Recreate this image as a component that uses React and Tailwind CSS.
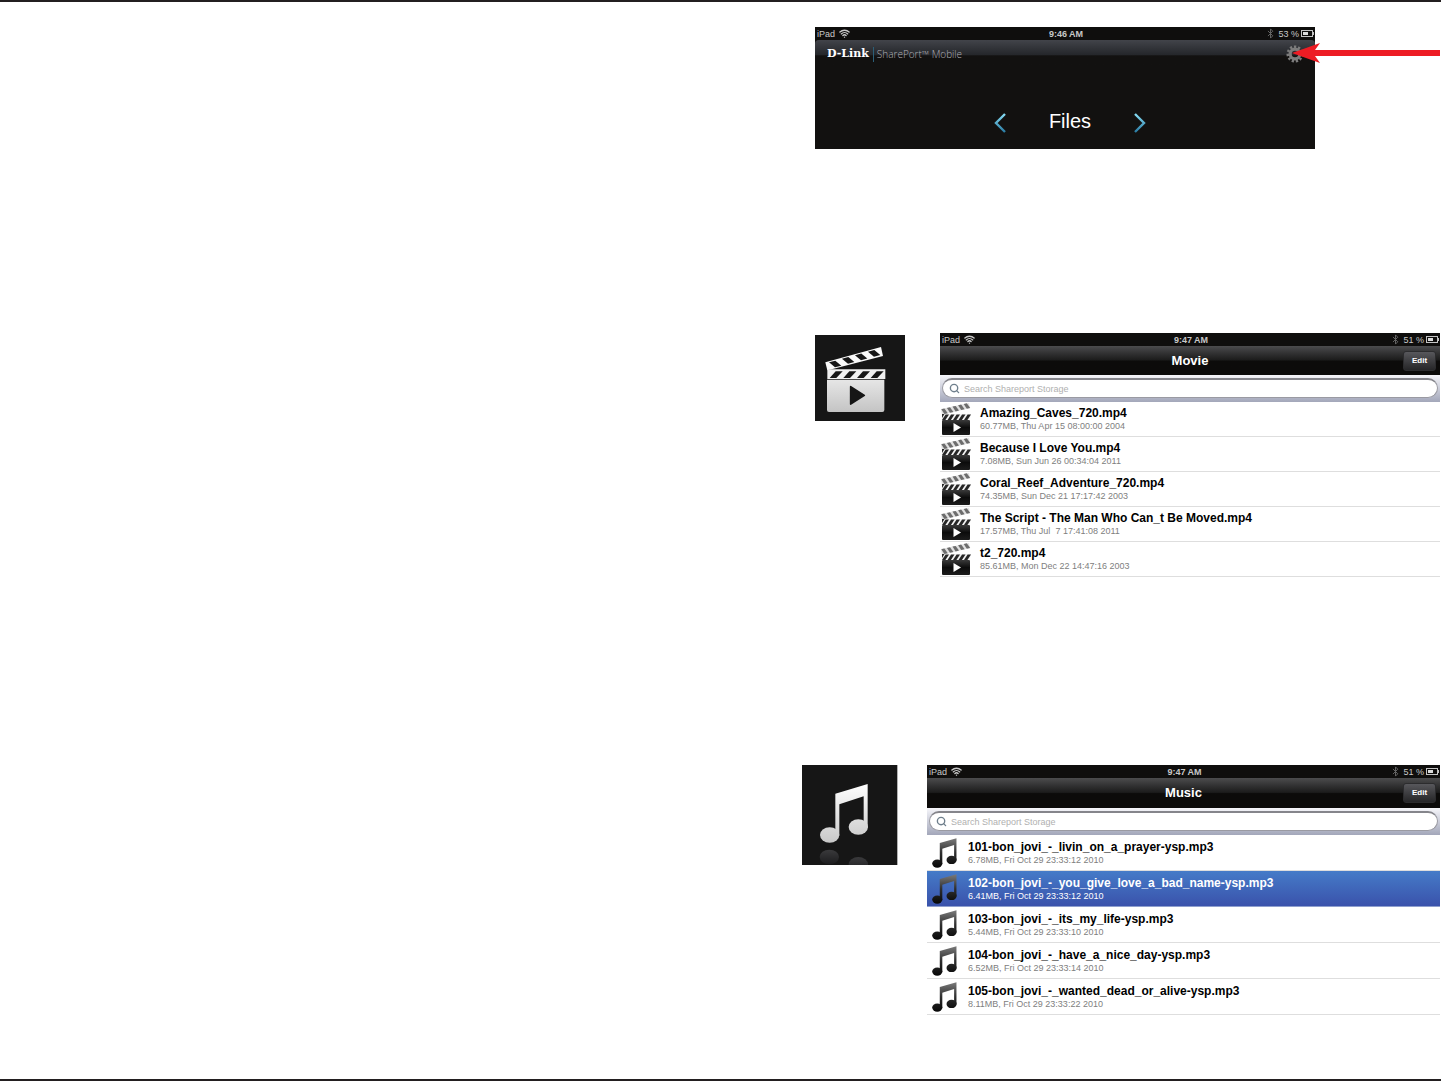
import { useState } from 'react';
import { Bluetooth, Search, Wifi } from 'lucide-react';

const movies = [
  { name: 'Amazing_Caves_720.mp4', info: '60.77MB, Thu Apr 15 08:00:00 2004' },
  { name: 'Because I Love You.mp4', info: '7.08MB, Sun Jun 26 00:34:04 2011' },
  { name: 'Coral_Reef_Adventure_720.mp4', info: '74.35MB, Sun Dec 21 17:17:42 2003' },
  { name: 'The Script - The Man Who Can_t Be Moved.mp4', info: '17.57MB, Thu Jul  7 17:41:08 2011' },
  { name: 't2_720.mp4', info: '85.61MB, Mon Dec 22 14:47:16 2003' },
];

const songs = [
  { name: '101-bon_jovi_-_livin_on_a_prayer-ysp.mp3', info: '6.78MB, Fri Oct 29 23:33:12 2010' },
  { name: '102-bon_jovi_-_you_give_love_a_bad_name-ysp.mp3', info: '6.41MB, Fri Oct 29 23:33:12 2010' },
  { name: '103-bon_jovi_-_its_my_life-ysp.mp3', info: '5.44MB, Fri Oct 29 23:33:10 2010' },
  { name: '104-bon_jovi_-_have_a_nice_day-ysp.mp3', info: '6.52MB, Fri Oct 29 23:33:14 2010' },
  { name: '105-bon_jovi_-_wanted_dead_or_alive-ysp.mp3', info: '8.11MB, Fri Oct 29 23:33:22 2010' },
];

const stripes = [0, 41, 82, 123];

function ClapperTile() {
  return (
    <svg viewBox="0 0 270 258" className="mt-[2px] h-[86px] w-[90px] shrink-0" aria-hidden="true">
      <defs>
        <linearGradient id="clapperLight" x1="0" y1="0" x2="0" y2="1">
          <stop offset="0" stopColor="#e6e6e6" />
          <stop offset="1" stopColor="#c4c4c4" />
        </linearGradient>
      </defs>
      <rect width="270" height="258" fill="#161616" />
      <g transform="translate(29 34)">
        <path d="M2 48 L169 2 L175 29 L24 68 L8 72 Z" fill="#fafafa" />
        {stripes.map((x) => (
          <path
            key={x}
            d="M13 48 L32 43 L50 58 L31 63 Z"
            fill="#161616"
            transform={`translate(${x * 0.95} ${x * -0.26})`}
          />
        ))}
        <path d="M8 69 H182 V98 H8 Z" fill="#f0f0f0" />
        {stripes.map((x) => (
          <path key={x} d="M15 95 L33 75 H54 L35 95 Z" fill="#161616" transform={`translate(${x} 0)`} />
        ))}
        <path d="M7 100 H179 V191 Q179 197 173 197 H13 Q7 197 7 191 Z" fill="url(#clapperLight)" />
        <path d="M78 121 L119 147 L78 173 Z" fill="#161616" stroke="#161616" strokeWidth="5" strokeLinejoin="round" />
      </g>
    </svg>
  );
}

function NoteTile() {
  return (
    <svg viewBox="0 0 288 300" className="h-[100px] w-[96px] shrink-0" aria-hidden="true">
      <defs>
        <linearGradient id="noteLight" gradientUnits="userSpaceOnUse" x1="0" y1="0" x2="0" y2="178">
          <stop offset="0" stopColor="#ffffff" />
          <stop offset="1" stopColor="#c8c8c8" />
        </linearGradient>
        <linearGradient id="noteShadow" x1="0" y1="0" x2="0" y2="1">
          <stop offset="0" stopColor="#3a3a3c" />
          <stop offset="1" stopColor="#1c1c1e" />
        </linearGradient>
      </defs>
      <rect width="286" height="300" fill="#161616" />
      <g transform="translate(53 56)" fill="url(#noteLight)">
        <path d="M47 30 L144 1 V132 H132 V38 L59 62 V156 H47 Z" />
        <ellipse cx="30" cy="154" rx="29" ry="23" />
        <ellipse cx="116" cy="130" rx="29" ry="23" />
      </g>
      <ellipse cx="82" cy="276" rx="29" ry="22" fill="url(#noteShadow)" />
      <ellipse cx="169" cy="298" rx="29" ry="22" fill="url(#noteShadow)" />
    </svg>
  );
}

function MovieIcon() {
  return (
    <svg viewBox="0 0 30 32" className="h-[32px] w-[30px]" aria-hidden="true">
      <defs>
        <linearGradient id="clapperDark" x1="0" y1="0" x2="0" y2="1">
          <stop offset="0" stopColor="#3a3a3a" />
          <stop offset="0.5" stopColor="#0c0c0c" />
          <stop offset="1" stopColor="#1c1c1c" />
        </linearGradient>
      </defs>
      <path d="M0 6 L28 0 L29 5 L3 11.5 L1 12 Z" fill="#e0e0e0" />
      {[0, 1, 2, 3, 4].map((i) => (
        <path
          key={i}
          d="M0.3 6.2 L3.4 5.5 L6.8 10.2 L3.4 11 Z"
          fill="#6c6c6c"
          transform={`translate(${i * 5.6} ${i * -1.3})`}
        />
      ))}
      <path d="M1 11 H30 L28.5 17 H1 Z" fill="#f2f2f2" />
      {[0, 1, 2, 3, 4].map((i) => (
        <path key={i} d="M1 17 L4.6 11.5 H8 L4.4 17 Z" fill="#262626" transform={`translate(${i * 5.5} 0)`} />
      ))}
      <path d="M1 11 H3.5 L1 15 Z" fill="#262626" />
      <rect x="1" y="17" width="28" height="15" rx="1" fill="url(#clapperDark)" />
      <path d="M12.5 20 L20 24.5 L12.5 29 Z" fill="#ffffff" />
    </svg>
  );
}

function MusicIcon() {
  return (
    <svg viewBox="0 0 146 178" className="h-[30px] w-[25px]" aria-hidden="true">
      <defs>
        <linearGradient id="noteDark" gradientUnits="userSpaceOnUse" x1="0" y1="0" x2="0" y2="178">
          <stop offset="0" stopColor="#7c7c7c" />
          <stop offset="0.5" stopColor="#2e2e2e" />
          <stop offset="1" stopColor="#060606" />
        </linearGradient>
      </defs>
      <g fill="url(#noteDark)">
        <path d="M45 30 L144 1 V134 H130 V42 L60 64 V156 H45 Z" />
        <ellipse cx="30" cy="152" rx="30" ry="25" />
        <ellipse cx="115" cy="130" rx="30" ry="25" />
      </g>
    </svg>
  );
}

function GearIcon() {
  return (
    <svg viewBox="0 0 20 20" className="h-[18px] w-[18px]" fill="none" aria-hidden="true">
      <circle cx="10" cy="10" r="5.4" stroke="#7c7c7c" strokeWidth="3.6" />
      <circle cx="10" cy="10" r="8" stroke="#7c7c7c" strokeWidth="3" pathLength="110" strokeDasharray="5.5 4.5" />
    </svg>
  );
}

function BatteryIcon() {
  return (
    <svg viewBox="0 0 14 8" className="h-[8px] w-[14px]" aria-hidden="true">
      <rect x="0.5" y="0.5" width="11" height="6" fill="none" stroke="#c4c4c4" />
      <rect x="2" y="2" width="5" height="3" fill="#dcdcdc" />
      <rect x="12" y="2" width="1" height="3" fill="#c4c4c4" />
    </svg>
  );
}

function StatusBar({ time, battery }) {
  return (
    <div className="grid h-[13px] grid-cols-3 items-center bg-[#0f0e0d] pl-[2px] text-[9px] leading-[12px] text-[#c8c8c8]">
      <div className="flex items-center gap-1">
        <span>iPad</span>
        <Wifi className="h-[11px] w-[11px]" strokeWidth={3} />
      </div>
      <span className="text-center font-bold">{time}</span>
      <div className="flex items-center justify-end gap-[2px]">
        <Bluetooth className="h-[11px] w-[11px] text-[#6a6a6a]" strokeWidth={2} />
        <span>{battery}</span>
        <BatteryIcon />
      </div>
    </div>
  );
}

function Chevron({ points, label }) {
  return (
    <button type="button" aria-label={label}>
      <svg viewBox="0 0 12 20" className="h-5 w-3" fill="none">
        <defs>
          <linearGradient id="chevronBlue" x1="0" y1="0" x2="0" y2="1">
            <stop offset="0" stopColor="#86dcf4" />
            <stop offset="1" stopColor="#2a7ca4" />
          </linearGradient>
        </defs>
        <polyline points={points} stroke="url(#chevronBlue)" strokeWidth="2.4" />
      </svg>
    </button>
  );
}

function HomePanel() {
  return (
    <div className="w-[500px] bg-[#121110] pb-[12px]">
      <StatusBar time="9:46 AM" battery="53 %" />
      <header className="flex h-[28px] items-center justify-between rounded-t bg-linear-to-b from-[#42444a] from-0% via-[#24262a] via-54% to-[#121110] to-56% pr-[11px] pl-[12px]">
        <div className="flex items-center">
          <span className="font-['DejaVu_Serif',serif] text-[11px] leading-[14px] font-bold text-white">D-Link</span>
          <span className="ml-[4px] h-[15px] w-px bg-[#2b5f78]" />
          <span className="ml-[3px] font-['Open_Sans',sans-serif] text-[10px] leading-[14px] font-light text-[#b0b0b6]">
            SharePort™ Mobile
          </span>
        </div>
        <button type="button" aria-label="Settings">
          <GearIcon />
        </button>
      </header>
      <div className="mt-[41px] flex items-center justify-center gap-[43px] pl-[10px]">
        <Chevron points="11,1 2,10 11,19" label="Previous" />
        <h1 className="pb-[4px] text-[20px] leading-[24px] text-white">Files</h1>
        <Chevron points="1,1 10,10 1,19" label="Next" />
      </div>
    </div>
  );
}

function FileRow({ file, icon, rowClass, selected, onSelect }) {
  return (
    <li
      className={
        selected
          ? 'border-b border-[#8f9fce] bg-linear-to-b from-[#457bc8] to-[#3a52ab]'
          : 'border-b border-[#dedede]'
      }
    >
      <button type="button" onClick={onSelect} className={`flex w-full items-center text-left ${rowClass}`}>
        {icon}
        <span className="flex flex-col">
          <span className={`text-[12px] leading-[14px] font-bold ${selected ? 'text-white' : 'text-black'}`}>
            {file.name}
          </span>
          <span className={`text-[9px] leading-[12px] whitespace-pre ${selected ? 'text-white' : 'text-[#808080]'}`}>
            {file.info}
          </span>
        </span>
      </button>
    </li>
  );
}

function FilePanel({ id, title, files, icon, widthClass, rowClass, headerClass, initial }) {
  const [selected, setSelected] = useState(initial);
  const [query, setQuery] = useState('');

  const shown = files.filter((file) => file.name.toLowerCase().includes(query.toLowerCase()));

  return (
    <div className={widthClass}>
      <StatusBar time="9:47 AM" battery="51 %" />
      <header
        className={`grid grid-cols-3 items-center bg-linear-to-b from-[#4c4c4e] from-0% via-[#1c1c1c] via-48% to-[#0c0b0a] to-52% ${headerClass}`}
      >
        <h2 className="col-start-2 text-center text-[13px] leading-[16px] font-bold text-white">{title}</h2>
        <button
          type="button"
          className="mr-[4px] h-[20px] w-[33px] justify-self-end rounded-[3px] border border-[#2c2c2e] bg-linear-to-b from-[#58585c] to-[#262628] text-[8px] leading-[12px] font-bold text-white"
        >
          Edit
        </button>
      </header>

      {/* Search */}
      <div className="bg-linear-to-b from-[#f6f6fa] to-[#a3a7ba] px-[2px] pt-[3px] pb-[4px]">
        <div className="flex h-[20px] items-center gap-[4px] rounded-full border border-t-2 border-[#9a9aa2] border-t-[#85858b] bg-white px-[6px]">
          <label htmlFor={id} aria-label={`Search ${title}`} className="shrink-0">
            <Search className="h-[11px] w-[11px] text-[#6f7f8c]" strokeWidth={3} />
          </label>
          <input
            id={id}
            type="text"
            value={query}
            onChange={(e) => setQuery(e.target.value)}
            placeholder="Search Shareport Storage"
            className="h-[16px] w-full text-[9px] leading-[16px] text-black outline-none placeholder:text-[#b0b0b0]"
          />
        </div>
      </div>

      <ul>
        {shown.map((file) => (
          <FileRow
            key={file.name}
            file={file}
            icon={icon}
            rowClass={rowClass}
            selected={file.name === selected}
            onSelect={() => setSelected(file.name)}
          />
        ))}
      </ul>
    </div>
  );
}

function App() {
  return (
    <main className="flex min-h-screen flex-col border-y-2 border-[#231f20] bg-white pr-px font-['Liberation_Sans',Arial,sans-serif]">
      {/* Home screen with the settings callout */}
      <section className="mt-[25px] flex justify-end">
        <HomePanel />
        <div className="relative w-[125px]">
          <svg viewBox="0 0 149 22" className="absolute top-[15px] right-0 h-[22px] w-[149px] max-w-none" aria-hidden="true">
            <path d="M1 11 L29 1 L24 8 H149 V14 H24 L29 21 Z" fill="#ed1c24" />
          </svg>
        </div>
      </section>

      {/* Movies */}
      <section className="mt-[184px] flex items-start justify-end gap-[35px]">
        <ClapperTile />
        <FilePanel
          id="movie-search"
          title="Movie"
          files={movies}
          icon={<MovieIcon />}
          widthClass="w-[500px]"
          rowClass="h-[34px] gap-[9px] pl-[1px]"
          headerClass="h-[29px]"
        />
      </section>

      {/* Music */}
      <section className="mt-[188px] mb-auto flex items-start justify-end gap-[29px]">
        <NoteTile />
        <FilePanel
          id="music-search"
          title="Music"
          files={songs}
          icon={<MusicIcon />}
          widthClass="w-[513px]"
          rowClass="h-[35px] gap-[11px] pl-[5px]"
          headerClass="h-[30px]"
          initial="102-bon_jovi_-_you_give_love_a_bad_name-ysp.mp3"
        />
      </section>
    </main>
  );
}

export default App;
